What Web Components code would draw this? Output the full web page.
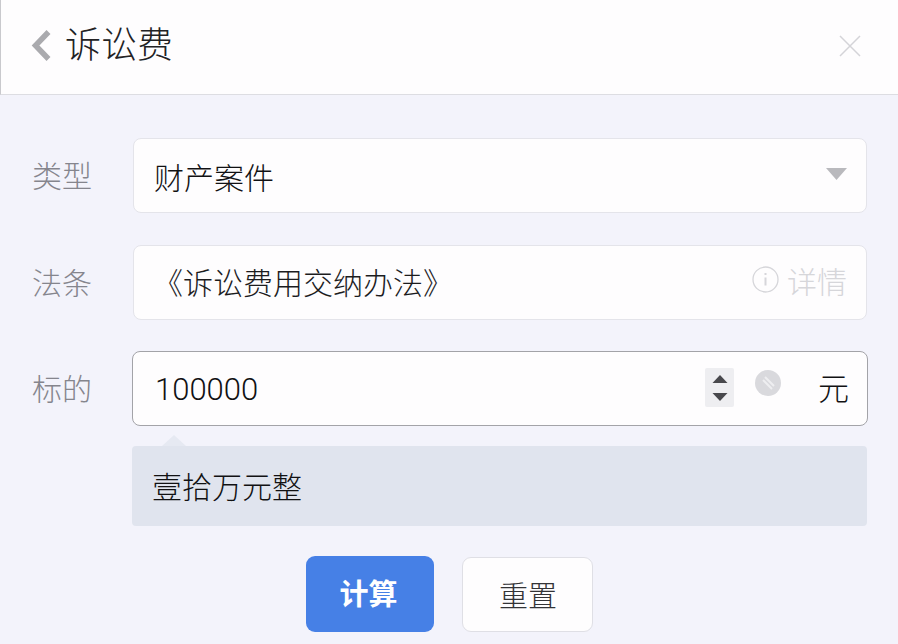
<!DOCTYPE html>
<html lang="zh-CN"><head><meta charset="utf-8"><title>诉讼费</title>
<style>
html,body{margin:0;padding:0;width:898px;height:644px;overflow:hidden;background:#f3f3fb}
body{font-family:"Liberation Sans","Noto Sans CJK SC",sans-serif;font-weight:300;color:#111113}
</style></head><body>
<calc-app>
  <calc-header slot="header">诉讼费</calc-header>
  <calc-row label="类型"><calc-field><span>财产案件</span><svg slot="end" width="22" height="14" viewBox="0 0 22 14" style="margin:-4px -1px 0 0"><path d="M0 1H21L10.500 13Z" fill="#b9b9bd"/></svg></calc-field></calc-row>
  <calc-row label="法条" style="margin-bottom:31px"><calc-field><span style="display:block;margin:-4px 0 0 -1px;font-size:30px;color:#1c1c1e">《诉讼费用交纳办法》</span><calc-detail slot="end"></calc-detail></calc-field></calc-row>
  <calc-row label="标的"><calc-field focused><span style="font-family:Roboto,sans-serif;font-size:31px;font-weight:300;color:#111113">100000</span><calc-unit slot="end"></calc-unit></calc-field></calc-row>
  <calc-tip>壹拾万元整</calc-tip>
  <calc-actions><calc-button primary>计算</calc-button><calc-button style="margin-top:1px">重置</calc-button></calc-actions>
</calc-app>
<script>
function def(name,html,init){customElements.define(name,class extends HTMLElement{constructor(){super();const r=this.attachShadow({mode:"open"});r.innerHTML=html;if(init)init(this,r)}})}
def("calc-app",`<style>:host{display:flex;flex-direction:column;width:898px;height:644px;box-sizing:border-box}
main{display:flex;flex-direction:column;padding:43px 31px 0 32px}</style>
<slot name="header"></slot><main><slot></slot></main>`);
def("calc-header",`<style>:host{display:flex;align-items:center;box-sizing:border-box;height:95px;padding:0 37px 3px 30px;background:#fefdfe;border-bottom:1px solid #dddde2;border-left:1px solid #c9c9cd}
svg{flex:none}.t{flex:1;font-size:36px;line-height:44px;margin-left:13px;color:#222224}</style>
<svg width="21" height="33" viewBox="0 0 21 33"><path d="M17.500 3L4.500 16.500L17.500 30" fill="none" stroke="#aaaaae" stroke-width="5.500"/></svg>
<div class="t"><slot></slot></div>
<svg width="22" height="22" viewBox="0 0 22 22"><path d="M1 1L21 21M21 1L1 21" stroke="#d4d4d8" stroke-width="1.500" fill="none"/></svg>`);
def("calc-row",`<style>:host{display:flex;align-items:center;margin-bottom:32px}
.l{width:101px;flex:none;font-size:30px;line-height:40px;color:#85858d;margin-top:2px}</style>
<div class="l"></div><slot></slot>`,(h,r)=>{r.querySelector(".l").textContent=h.getAttribute("label")||""});
def("calc-field",`<style>:host{flex:1;display:flex;align-items:center;box-sizing:border-box;height:75px;padding:0 19px 0 20px;background:#fefdfe;border:1px solid #e4e4ea;border-radius:8px;font-size:30px;color:#111113}
:host([focused]){border-color:#a3a3a8;margin-left:-1px;margin-right:-1px;padding-left:22px;padding-right:18px;padding-top:2px}
.m{flex:1;white-space:nowrap}</style><div class="m"><slot></slot></div><slot name="end"></slot>`);
def("calc-detail",`<style>:host{display:flex;align-items:center;gap:8px;color:#d6d6da;font-size:30px;margin-top:-6px}svg{flex:none}</style>
<svg width="27" height="27" viewBox="0 0 27 27"><circle cx="13.500" cy="13.500" r="12.500" fill="none" stroke="#d6d6da" stroke-width="1.300"/><path d="M13.500 7v2M13.500 11.500v8" stroke="#d6d6da" stroke-width="2"/></svg><span>详情</span>`);
def("calc-unit",`<style>:host{display:flex;align-items:center;font-size:31px;color:#111113}
.sp{width:29px;height:39px;background:#eeeef1;border-radius:2px;display:flex;align-items:center;justify-content:center;margin:-4px 1px 0 0}
.c{width:26px;height:26px;border-radius:50%;background:#d9d9dd;margin:-14px 37px 0 20px;display:flex;align-items:center;justify-content:center}
span{margin-top:-7px}</style>
<div class="sp"><svg width="16" height="32" viewBox="0 0 16 32"><path d="M8 3L15.500 11H.5ZM.5 21H15.500L8 29Z" fill="#48484c"/></svg></div>
<div class="c"><svg width="15" height="15" viewBox="0 0 15 15"><path d="M2 5L11 14M4 2L13 11" stroke="#eeeef0" stroke-width="2"/></svg></div><span>元</span>`);
def("calc-tip",`<style>:host{display:block;position:relative;box-sizing:border-box;height:80px;margin:-12px 0 0 100px;background:#e0e4ee;border-radius:4px;padding:21px 20px 0;font-size:30px;line-height:42px;color:#111113}
:host::before{content:"";position:absolute;left:30px;top:-11px;border:solid transparent;border-width:0 12px 11px;border-bottom-color:#e6e9f2}</style><slot></slot>`);
def("calc-actions",`<style>:host{display:flex;justify-content:flex-start;align-items:flex-start;gap:28px;margin:30px 0 0 274px}</style><slot></slot>`);
def("calc-button",`<style>:host{display:flex;align-items:center;justify-content:center;box-sizing:border-box;width:131px;height:75px;padding:0 0 2px 1px;background:#fefdfe;border:1px solid #dfdfe5;border-radius:9px;font-size:29px;color:#333336}
:host([primary]){width:128px;height:76px;padding:0 3px 4px 0;background:#4680e6;border:0;color:#fff;font-weight:700}</style><slot></slot>`);
</script>
</body></html>
